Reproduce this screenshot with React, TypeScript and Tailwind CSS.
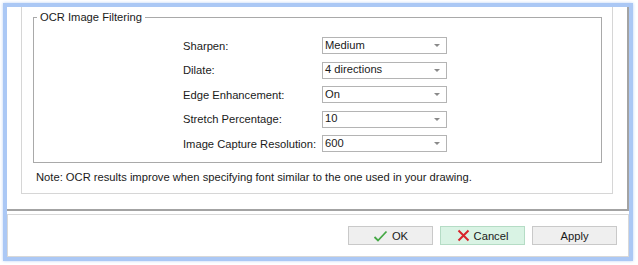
const rows = [
  { label: 'Sharpen:', value: 'Medium' },
  { label: 'Dilate:', value: '4 directions' },
  { label: 'Edge Enhancement:', value: 'On' },
  { label: 'Stretch Percentage:', value: '10' },
  { label: 'Image Capture Resolution:', value: '600' },
]

function Combo({ value }: { value: string }) {
  return (
    <div className="w-[125px] h-[17px] border border-[#b4b4b4] bg-white flex items-center justify-between pl-[2px] pr-[6px]">
      <span className="leading-none">{value}</span>
      <svg width="6" height="3" viewBox="0 0 6 3">
        <path d="M0 0h6L3 3z" fill="#8a8a8a" />
      </svg>
    </div>
  )
}

function Check() {
  return (
    <svg width="15" height="12" viewBox="0 0 15 12">
      <path d="M1.5 7l3.5 3.5L13.5 1.5" fill="none" stroke="#45a845" strokeWidth="1.8" />
    </svg>
  )
}

function Cross() {
  return (
    <svg width="13" height="13" viewBox="0 0 13 13">
      <path d="M1.5 1.5l10 10M11.5 1.5l-10 10" fill="none" stroke="#d8242b" strokeWidth="2" />
    </svg>
  )
}

export default function App() {
  return (
    <div className="w-[638px] h-[265px] bg-white text-[#1a1a1a] text-[11.2px] leading-[14px]" style={{ fontFamily: '"Liberation Sans", Arial, sans-serif' }}>
      <div className="ml-[3px] mt-[3px] w-[630px] h-[258px] border-[4px] border-[#abc8f5] shadow-[0_0_3px_#bcd3f7] bg-white flex flex-col">
        {/* tab page */}
        <div className="h-[204px] border-r-2 border-b-2 border-[#a3a3a3] pl-[14px] pr-[14px]">
          <div className="h-[187px] border-l border-r border-b border-[#d6d6d6] pl-[11px] pr-[10px] pt-[10px]">
            <div className="relative h-[146px] border border-[#a9a9a9] pt-[19px] pl-[149px]">
              <span className="absolute left-[3px] top-[-8px] px-[3px] bg-white">OCR Image Filtering</span>
              <div className="flex flex-col gap-[7.5px]">
                {rows.map((r) => (
                  <div key={r.label} className="flex items-center">
                    <span className="w-[139px] whitespace-nowrap">{r.label}</span>
                    <Combo value={r.value} />
                  </div>
                ))}
              </div>
            </div>
            <p className="mt-[7px] pl-[3px]">
              Note: OCR results improve when specifying font similar to the one used in your drawing.
            </p>
          </div>
        </div>
        {/* footer */}
        <div className="mt-[3px] flex-1 border border-[#d8d8d8] flex justify-end gap-[7px] pt-[11px] pr-[11px]">
          <button className="w-[85px] h-[19px] bg-[#efefef] border border-[#c9c9c9] flex items-center justify-center gap-[4px]">
            <Check />
            <span>OK</span>
          </button>
          <button className="w-[85px] h-[19px] bg-[#d9f3e4] border border-[#b5dcc5] flex items-center justify-center gap-[4px]">
            <Cross />
            <span>Cancel</span>
          </button>
          <button className="w-[85px] h-[19px] bg-[#efefef] border border-[#c9c9c9] flex items-center justify-center">
            <span>Apply</span>
          </button>
        </div>
      </div>
    </div>
  )
}
